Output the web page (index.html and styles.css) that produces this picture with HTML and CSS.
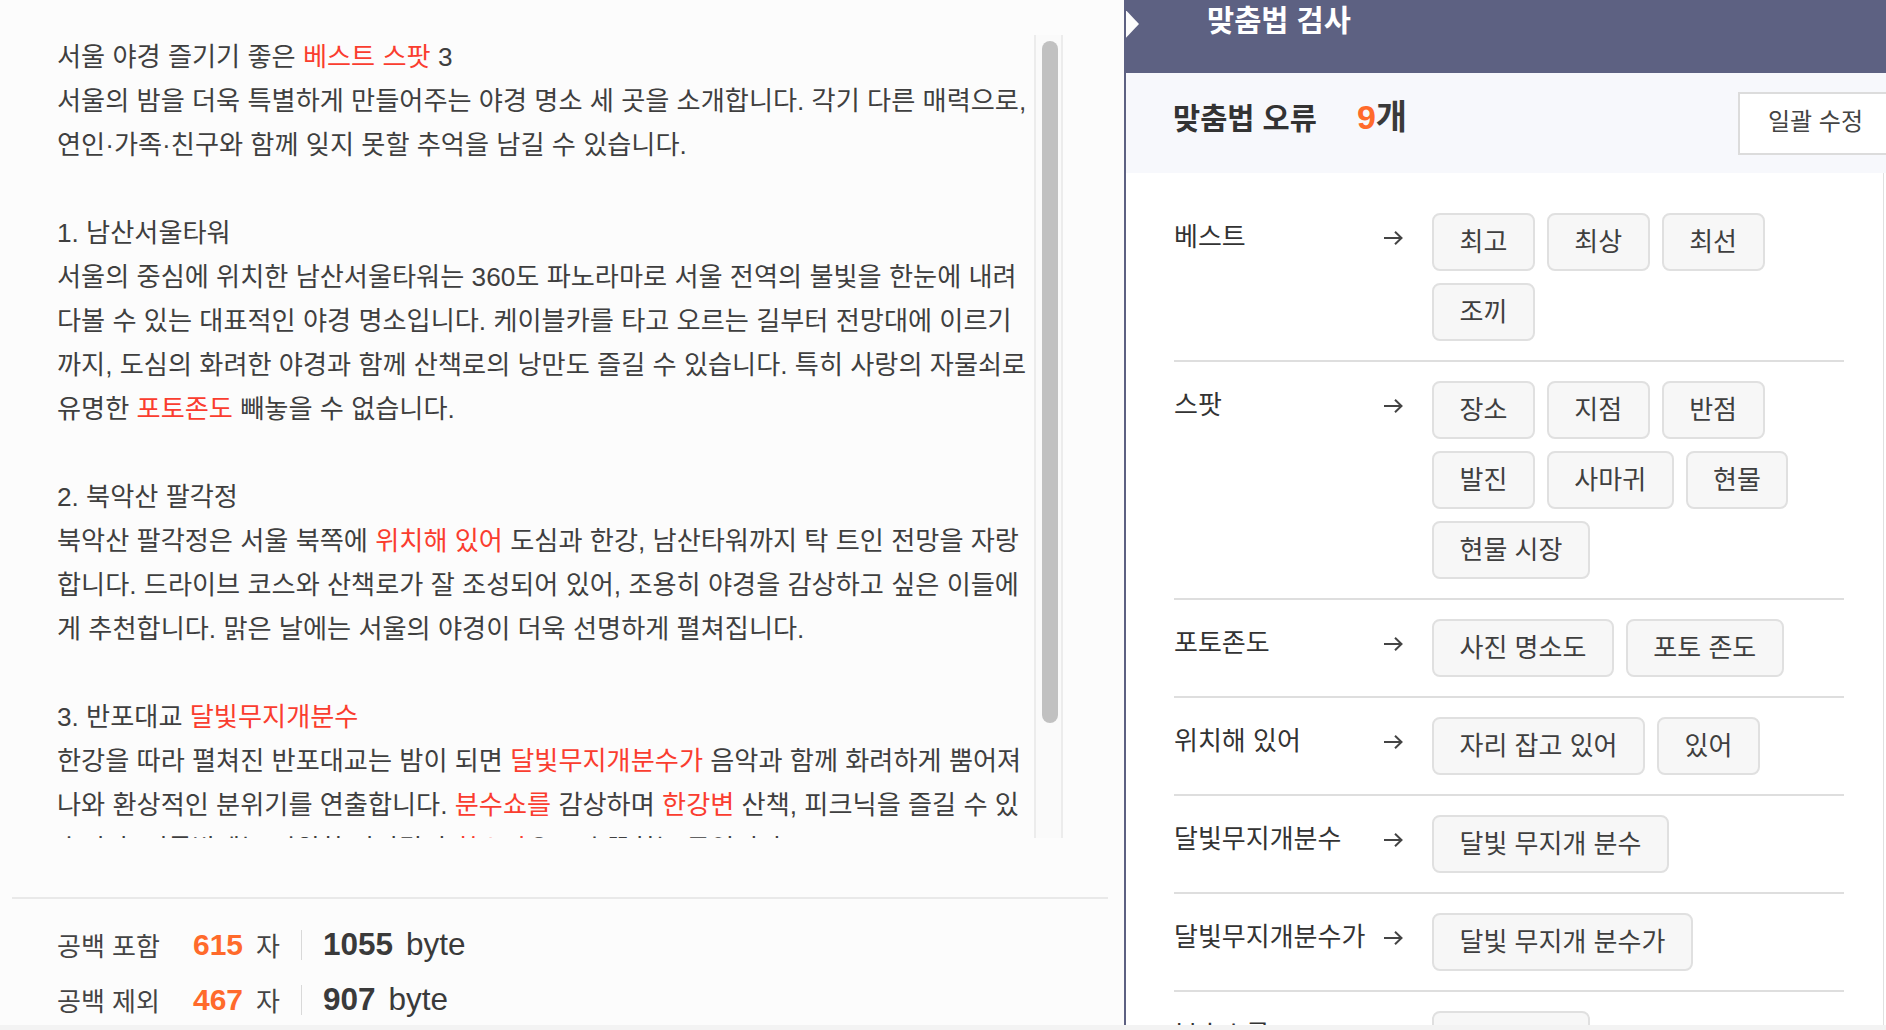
FILE: index.html
```html
<!DOCTYPE html>
<html lang="ko">
<head>
<meta charset="utf-8">
<title>맞춤법 검사</title>
<link rel="stylesheet" href="styles.css">
</head>
<body>
<div class="app">
  <section class="editor-pane">
    <div class="editor">
      <div class="doc">
        <p class="line">서울 야경 즐기기 좋은 <span class="err">베스트</span> <span class="err">스팟</span> 3</p>
        <p class="line">서울의 밤을 더욱 특별하게 만들어주는 야경 명소 세 곳을 소개합니다. 각기 다른 매력으로,</p>
        <p class="line">연인·가족·친구와 함께 잊지 못할 추억을 남길 수 있습니다.</p>
        <p class="line"></p>
        <p class="line">1. 남산서울타워</p>
        <p class="line">서울의 중심에 위치한 남산서울타워는 360도 파노라마로 서울 전역의 불빛을 한눈에 내려</p>
        <p class="line">다볼 수 있는 대표적인 야경 명소입니다. 케이블카를 타고 오르는 길부터 전망대에 이르기</p>
        <p class="line">까지, 도심의 화려한 야경과 함께 산책로의 낭만도 즐길 수 있습니다. 특히 사랑의 자물쇠로</p>
        <p class="line">유명한 <span class="err">포토존도</span> 빼놓을 수 없습니다.</p>
        <p class="line"></p>
        <p class="line">2. 북악산 팔각정</p>
        <p class="line">북악산 팔각정은 서울 북쪽에 <span class="err">위치해 있어</span> 도심과 한강, 남산타워까지 탁 트인 전망을 자랑</p>
        <p class="line">합니다. 드라이브 코스와 산책로가 잘 조성되어 있어, 조용히 야경을 감상하고 싶은 이들에</p>
        <p class="line">게 추천합니다. 맑은 날에는 서울의 야경이 더욱 선명하게 펼쳐집니다.</p>
        <p class="line"></p>
        <p class="line">3. 반포대교 <span class="err">달빛무지개분수</span></p>
        <p class="line">한강을 따라 펼쳐진 반포대교는 밤이 되면 <span class="err">달빛무지개분수가</span> 음악과 함께 화려하게 뿜어져</p>
        <p class="line">나와 환상적인 분위기를 연출합니다. <span class="err">분수쇼를</span> 감상하며 <span class="err">한강변</span> 산책, 피크닉을 즐길 수 있</p>
        <p class="line">습니다. 여름밤에는 시원한 강바람과 <span class="err">핫스팟</span>으로 손꼽히는 곳입니다.</p>
      </div>
      <div class="scrollbar"><div class="thumb"></div></div>
    </div>
    <div class="stats">
      <div class="stat-row">
        <span class="stat-label">공백 포함</span>
        <span class="num">615</span>
        <span class="unit">자</span>
        <span class="sep"></span>
        <span class="bytes">1055</span>
        <span class="byte-unit">byte</span>
      </div>
      <div class="stat-row">
        <span class="stat-label">공백 제외</span>
        <span class="num">467</span>
        <span class="unit">자</span>
        <span class="sep"></span>
        <span class="bytes">907</span>
        <span class="byte-unit">byte</span>
      </div>
    </div>
  </section>

  <aside class="checker">
    <header class="checker-head">
      <h2 class="checker-title">맞춤법 검사</h2>
    </header>
    <div class="summary">
      <span class="summary-title">맞춤법 오류</span>
      <span class="count"><b>9</b>개</span>
      <button class="fix-all" type="button">일괄 수정</button>
    </div>
    <div class="list">
      <div class="rows">
        <div class="row">
          <div class="label">베스트</div>
          <div class="arrow"><svg width="20" height="16" viewBox="0 0 20 16"><path d="M1 8H18.5M12 1.8L18.5 8L12 14.2" fill="none" stroke="#444" stroke-width="2"/></svg></div>
          <div class="chips">
            <span class="chip">최고</span><span class="chip">최상</span><span class="chip">최선</span><span class="chip">조끼</span>
          </div>
        </div>
        <div class="row">
          <div class="label">스팟</div>
          <div class="arrow"><svg width="20" height="16" viewBox="0 0 20 16"><path d="M1 8H18.5M12 1.8L18.5 8L12 14.2" fill="none" stroke="#444" stroke-width="2"/></svg></div>
          <div class="chips">
            <span class="chip">장소</span><span class="chip">지점</span><span class="chip">반점</span><span class="chip">발진</span><span class="chip">사마귀</span><span class="chip">현물</span><span class="chip">현물 시장</span>
          </div>
        </div>
        <div class="row">
          <div class="label">포토존도</div>
          <div class="arrow"><svg width="20" height="16" viewBox="0 0 20 16"><path d="M1 8H18.5M12 1.8L18.5 8L12 14.2" fill="none" stroke="#444" stroke-width="2"/></svg></div>
          <div class="chips">
            <span class="chip">사진 명소도</span><span class="chip">포토 존도</span>
          </div>
        </div>
        <div class="row">
          <div class="label">위치해 있어</div>
          <div class="arrow"><svg width="20" height="16" viewBox="0 0 20 16"><path d="M1 8H18.5M12 1.8L18.5 8L12 14.2" fill="none" stroke="#444" stroke-width="2"/></svg></div>
          <div class="chips">
            <span class="chip">자리 잡고 있어</span><span class="chip">있어</span>
          </div>
        </div>
        <div class="row">
          <div class="label">달빛무지개분수</div>
          <div class="arrow"><svg width="20" height="16" viewBox="0 0 20 16"><path d="M1 8H18.5M12 1.8L18.5 8L12 14.2" fill="none" stroke="#444" stroke-width="2"/></svg></div>
          <div class="chips">
            <span class="chip">달빛 무지개 분수</span>
          </div>
        </div>
        <div class="row">
          <div class="label">달빛무지개분수가</div>
          <div class="arrow"><svg width="20" height="16" viewBox="0 0 20 16"><path d="M1 8H18.5M12 1.8L18.5 8L12 14.2" fill="none" stroke="#444" stroke-width="2"/></svg></div>
          <div class="chips">
            <span class="chip">달빛 무지개 분수가</span>
          </div>
        </div>
        <div class="row">
          <div class="label">분수쇼를</div>
          <div class="arrow"><svg width="20" height="16" viewBox="0 0 20 16"><path d="M1 8H18.5M12 1.8L18.5 8L12 14.2" fill="none" stroke="#444" stroke-width="2"/></svg></div>
          <div class="chips">
            <span class="chip">분수 쇼를</span>
          </div>
        </div>
      </div>
      <div class="edge"></div>
    </div>
  </aside>
</div>
</body>
</html>
```

FILE: styles.css
```css
html, body {
  margin: 0;
  height: 100%;
}

body {
  background: #f3f3f3;
  font-family: "Liberation Sans", "Noto Sans CJK KR", sans-serif;
  color: #3f3f3f;
  overflow: hidden;
}

.app {
  display: flex;
  height: 1025px;
}

/* ---------- editor ---------- */
.editor-pane {
  width: 1124px;
  flex: none;
  box-sizing: border-box;
  background: #fcfcfc;
  padding: 35px 16px 0 12px;
  display: flex;
  flex-direction: column;
}

.editor {
  display: flex;
  width: 1051px;
  height: 803px;
}

.doc {
  flex: 1;
  min-width: 0;
  padding-left: 45px;
  overflow: hidden;
  font-size: 26.2px;
  line-height: 44px;
  white-space: nowrap;
}

.line {
  margin: 0;
  height: 44px;
}

.err {
  color: #fa3d2f;
}

.scrollbar {
  width: 29px;
  flex: none;
  box-sizing: border-box;
  border-left: 2px solid #ececec;
  border-right: 2px solid #ececec;
  background: #fafafa;
  padding: 6px 3px 0 6px;
}

.thumb {
  height: 682px;
  background: #c1c1c1;
  border-radius: 8px;
}

.stats {
  margin-top: 59px;
  border-top: 2px solid #e9e9e9;
  padding: 18px 0 0 45px;
}

.stat-row {
  display: flex;
  align-items: center;
  height: 55px;
}

.stat-label {
  width: 136px;
  font-size: 26px;
  color: #444;
}

.num {
  font-size: 30px;
  font-weight: 700;
  color: #ff6a2b;
}

.unit {
  font-size: 26px;
  margin-left: 13px;
  color: #444;
}

.sep {
  width: 1px;
  height: 30px;
  background: #d9d9d9;
  margin: 0 21px 0 21px;
}

.bytes {
  font-size: 31.5px;
  font-weight: 700;
  color: #3a3a3a;
}

.byte-unit {
  font-size: 31.5px;
  margin-left: 13px;
  color: #3a3a3a;
}

/* ---------- checker panel ---------- */
.checker {
  flex: 1;
  min-width: 0;
  border-left: 2px solid #5d6182;
  background: #fff;
  display: flex;
  flex-direction: column;
  overflow: hidden;
}

.checker-head {
  position: relative;
  height: 73px;
  flex: none;
  box-sizing: border-box;
  background: #5d6182;
  padding: 1px 0 0 81px;
}

.checker-head::before {
  content: "";
  position: absolute;
  left: -2px;
  top: 8px;
  border-left: 15px solid #fcfcfc;
  border-top: 16px solid transparent;
  border-bottom: 16px solid transparent;
}

.checker-title {
  margin: 0;
  font-size: 29.5px;
  font-weight: 700;
  line-height: 40px;
  color: #fff;
}

.summary {
  height: 100px;
  flex: none;
  box-sizing: border-box;
  background: #f7f8fc;
  display: flex;
  align-items: center;
  padding-left: 47px;
}

.summary-title {
  font-size: 29.5px;
  font-weight: 700;
  color: #333;
  margin-bottom: 14px;
}

.count {
  margin-left: 40px;
  margin-bottom: 18px;
  font-size: 34px;
  font-weight: 700;
  color: #3a3a3a;
}

.count b {
  color: #ff6a2b;
}

.fix-all {
  margin-left: auto;
  margin-right: -12px;
  width: 160px;
  height: 63px;
  box-sizing: border-box;
  border: 2px solid #dcdcdc;
  background: #fff;
  text-align: left;
  padding: 0 0 8px 28px;
  font-family: "Liberation Sans", "Noto Sans CJK KR", sans-serif;
  font-size: 24px;
  color: #444;
}

.list {
  flex: 1;
  min-height: 0;
  display: flex;
}

.rows {
  flex: 1;
  min-width: 0;
  padding: 21px 39px 0 48px;
  overflow: hidden;
}

.edge {
  width: 2px;
  flex: none;
  border-left: 1px solid #e0e0e0;
}

.row {
  display: grid;
  grid-template-columns: 209px 49px 412px;
  padding: 19px 0;
  border-bottom: 2px solid #dedede;
}

.label {
  font-size: 26px;
  line-height: 48px;
  color: #333;
  white-space: nowrap;
}

.arrow {
  height: 50px;
  display: flex;
  align-items: center;
}

.arrow svg {
  display: block;
}

.chips {
  display: flex;
  flex-wrap: wrap;
  gap: 12px;
}

.chip {
  height: 58px;
  box-sizing: border-box;
  padding: 0 25.5px 5px;
  border: 2px solid #e0e0e0;
  border-radius: 8px;
  background: #f7f7f7;
  font-size: 26px;
  color: #3f3f3f;
  display: inline-flex;
  align-items: center;
  white-space: nowrap;
}
```
